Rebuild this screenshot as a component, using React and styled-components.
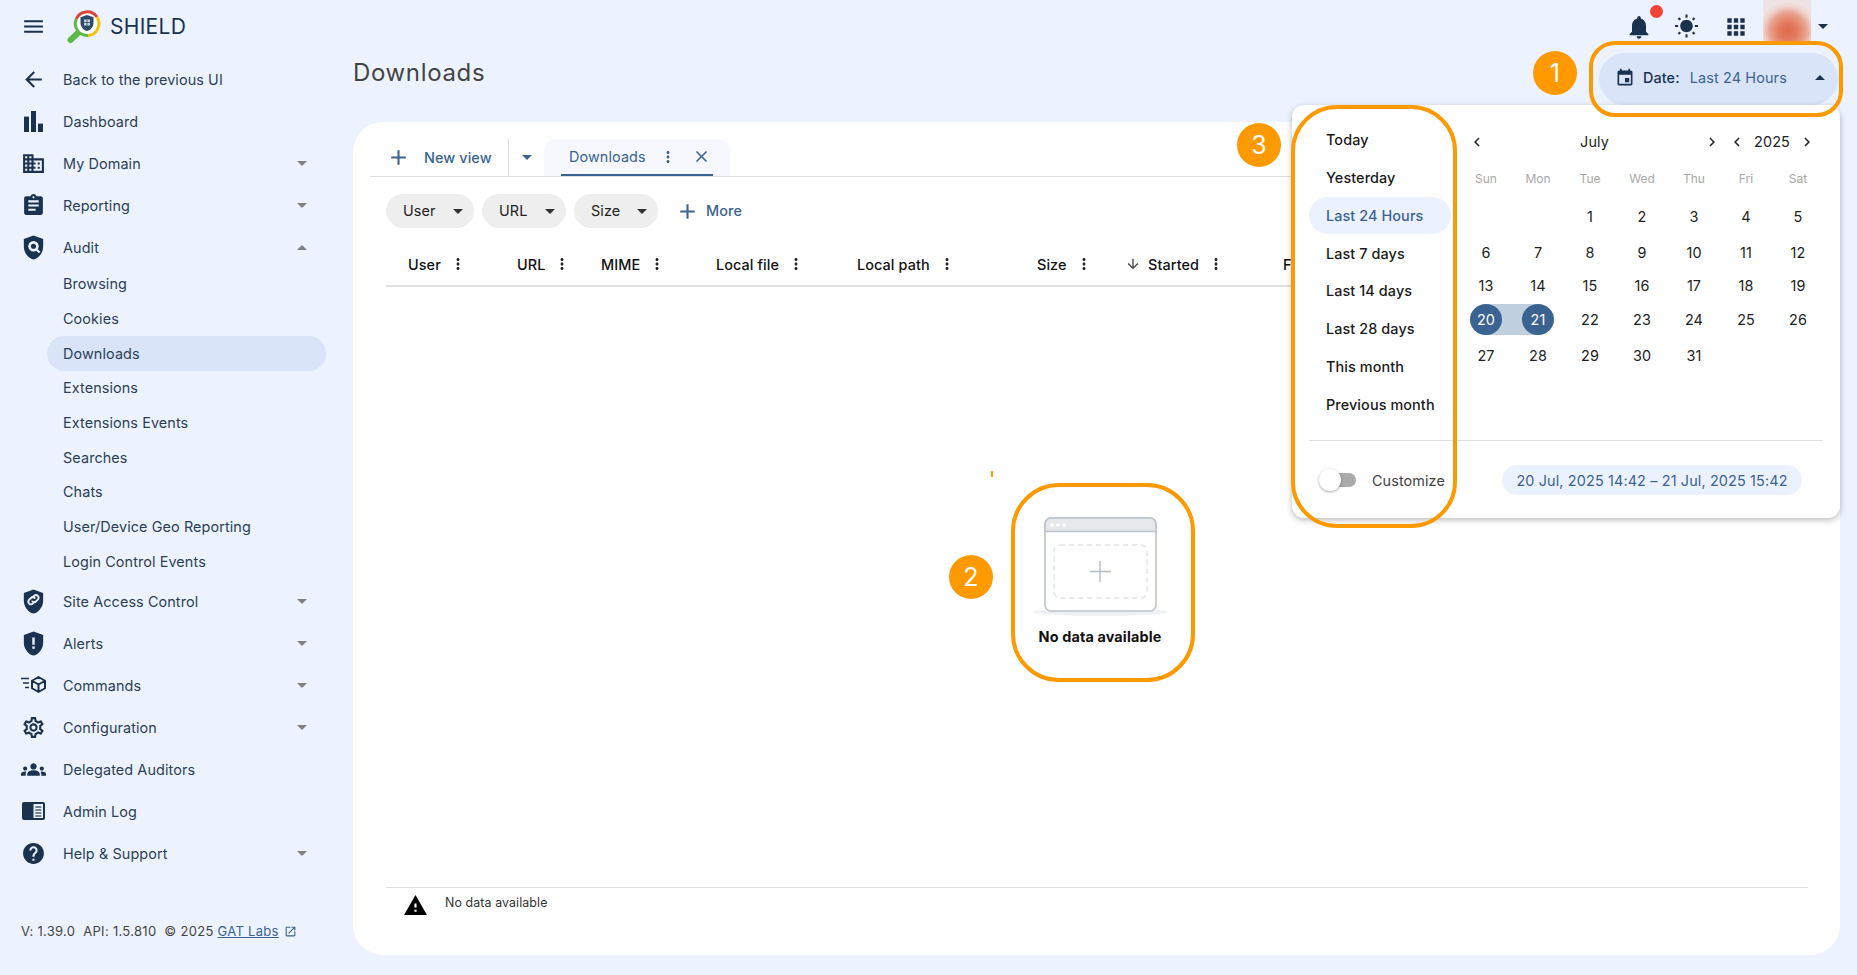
import React from 'react';
import styled, { createGlobalStyle } from 'styled-components';

const NAVY = '#1a3150';
const BLUE = '#3a6391';
const PAGE = '#edf3fe';
const ACTIVE = '#d9e4f8';

const Global = createGlobalStyle`
  html, body { margin: 0; padding: 0; height: 100%; overflow: hidden; background: ${PAGE}; }
  body { font-family: Inter, "Noto Sans", "Liberation Sans", sans-serif; font-size: 14.4px; letter-spacing: 0.1px; color: #222; }
  * { box-sizing: border-box; }
`;

const P = {
  menu: 'M3 18h18v-2H3v2zm0-5h18v-2H3v2zm0-7v2h18V6H3z',
  back: 'M20 11H7.83l5.59-5.59L12 4l-8 8 8 8 1.41-1.41L7.83 13H20v-2z',
  domain: 'M12 7V3H2v18h20V7H12zM6 19H4v-2h2v2zm0-4H4v-2h2v2zm0-4H4V9h2v2zm0-4H4V5h2v2zm4 12H8v-2h2v2zm0-4H8v-2h2v2zm0-4H8V9h2v2zm0-4H8V5h2v2zm10 12h-8v-2h2v-2h-2v-2h2v-2h-2V9h8v10zm-2-8h-2v2h2v-2zm0 4h-2v2h2v-2z',
  assignment: 'M19 3h-4.18C14.4 1.84 13.3 1 12 1c-1.3 0-2.4.84-2.82 2H5c-1.1 0-2 .9-2 2v14c0 1.1.9 2 2 2h14c1.1 0 2-.9 2-2V5c0-1.1-.9-2-2-2zm-7 0c.55 0 1 .45 1 1s-.45 1-1 1-1-.45-1-1 .45-1 1-1zm2 14H7v-2h7v2zm3-4H7v-2h10v2zm0-4H7V7h10v2z',
  bell: 'M12 22c1.1 0 2-.9 2-2h-4c0 1.1.89 2 2 2zm6-6v-5c0-3.07-1.64-5.64-4.5-6.32V4c0-.83-.67-1.5-1.5-1.5s-1.5.67-1.5 1.5v.68C7.63 5.36 6 7.92 6 11v5l-2 2v1h16v-1l-2-2z',
  sun: 'M6.76 4.84l-1.8-1.79-1.41 1.41 1.79 1.79 1.42-1.41zM4 10.5H1v2h3v-2zm9-9.95h-2V3.5h2V.55zm7.45 3.91l-1.41-1.41-1.79 1.79 1.41 1.41 1.79-1.79zm-3.21 13.7l1.79 1.8 1.41-1.41-1.8-1.79-1.4 1.4zM20 10.5v2h3v-2h-3zm-8-5c-3.31 0-6 2.69-6 6s2.69 6 6 6 6-2.69 6-6-2.69-6-6-6zm-1 16.95h2V19.5h-2v2.95zm-7.45-3.91l1.41 1.41 1.79-1.8-1.41-1.41-1.79 1.8z',
  apps: 'M4 8h4V4H4v4zm6 12h4v-4h-4v4zm-6 0h4v-4H4v4zm0-6h4v-4H4v4zm6 0h4v-4h-4v4zm6-10v4h4V4h-4zm-6 4h4V4h-4v4zm6 6h4v-4h-4v4zm0 6h4v-4h-4v4z',
  event: 'M17 12h-5v5h5v-5zM16 1v2H8V1H6v2H5c-1.11 0-1.99.9-1.99 2L3 19c0 1.1.89 2 2 2h14c1.1 0 2-.9 2-2V5c0-1.1-.9-2-2-2h-1V1h-2zm3 18H5V8h14v11z',
  add: 'M19 13h-6v6h-2v-6H5v-2h6V5h2v6h6v2z',
  kebab: 'M12 8c1.1 0 2-.9 2-2s-.9-2-2-2-2 .9-2 2 .9 2 2 2zm0 2c-1.1 0-2 .9-2 2s.9 2 2 2 2-.9 2-2-.9-2-2-2zm0 6c-1.1 0-2 .9-2 2s.9 2 2 2 2-.9 2-2-.9-2-2-2z',
  close: 'M19 6.41L17.59 5 12 10.59 6.41 5 5 6.41 10.59 12 5 17.59 6.41 19 12 13.41 17.59 19 19 17.59 13.41 12z',
  down: 'M20 12l-1.41-1.41L13 16.17V4h-2v12.17l-5.58-5.59L4 12l8 8 8-8z',
  left: 'M15.41 7.41 14 6l-6 6 6 6 1.41-1.41L10.83 12z',
  right: 'M10 6 8.59 7.41 13.17 12l-4.58 4.59L10 18l6-6z',
  warning: 'M1 21h22L12 2 1 21zm12-3h-2v-2h2v2zm0-4h-2v-4h2v4z',
  settings: 'M19.43 12.98c.04-.32.07-.64.07-.98 0-.34-.03-.66-.07-.98l2.11-1.65c.19-.15.24-.42.12-.64l-2-3.46c-.09-.16-.26-.25-.44-.25-.06 0-.12.01-.17.03l-2.49 1c-.52-.4-1.08-.73-1.69-.98l-.38-2.65C14.46 2.18 14.25 2 14 2h-4c-.25 0-.46.18-.49.42l-.38 2.65c-.61.25-1.17.59-1.69.98l-2.49-1c-.06-.02-.12-.03-.18-.03-.17 0-.34.09-.43.25l-2 3.46c-.13.22-.07.49.12.64l2.11 1.65c-.04.32-.07.65-.07.98 0 .33.03.66.07.98l-2.11 1.65c-.19.15-.24.42-.12.64l2 3.46c.09.16.26.25.44.25.06 0 .12-.01.17-.03l2.49-1c.52.4 1.08.73 1.69.98l.38 2.65c.03.24.24.42.49.42h4c.25 0 .46-.18.49-.42l.38-2.65c.61-.25 1.17-.59 1.69-.98l2.49 1c.06.02.12.03.18.03.17 0 .34-.09.43-.25l2-3.46c.12-.22.07-.49-.12-.64l-2.11-1.65zm-1.98-1.71c.04.31.05.52.05.73 0 .21-.02.43-.05.73l-.14 1.13.89.7 1.08.84-.7 1.21-1.27-.51-1.04-.42-.9.68c-.43.32-.84.56-1.25.73l-1.06.43-.16 1.13-.2 1.35h-1.4l-.19-1.35-.16-1.13-1.06-.43c-.43-.18-.83-.41-1.23-.71l-.91-.7-1.06.43-1.27.51-.7-1.21 1.08-.84.89-.7-.14-1.13c-.03-.31-.05-.54-.05-.74s.02-.43.05-.73l.14-1.13-.89-.7-1.08-.84.7-1.21 1.27.51 1.04.42.9-.68c.43-.32.84-.56 1.25-.73l1.06-.43.16-1.13.2-1.35h1.39l.19 1.35.16 1.13 1.06.43c.43.18.83.41 1.23.71l.91.7 1.06-.43 1.27-.51.7 1.21-1.07.85-.89.7.14 1.13zM12 8c-2.21 0-4 1.79-4 4s1.79 4 4 4 4-1.79 4-4-1.79-4-4-4zm0 6c-1.1 0-2-.9-2-2s.9-2 2-2 2 .9 2 2-.9 2-2 2z',
  groups: 'M12 12.75c1.63 0 3.07.39 4.24.9 1.08.48 1.76 1.56 1.76 2.73V18H6v-1.61c0-1.18.68-2.26 1.76-2.73 1.17-.52 2.61-.91 4.24-.91zM4 13c1.1 0 2-.9 2-2s-.9-2-2-2-2 .9-2 2 .9 2 2 2zm1.13 1.1c-.37-.06-.74-.1-1.13-.1-.99 0-1.93.21-2.78.58C.48 14.9 0 15.62 0 16.43V18h4.5v-1.61c0-.83.23-1.61.63-2.29zM20 13c1.1 0 2-.9 2-2s-.9-2-2-2-2 .9-2 2 .9 2 2 2zm4 3.43c0-.81-.48-1.53-1.22-1.85-.85-.37-1.79-.58-2.78-.58-.39 0-.76.04-1.13.1.4.68.63 1.46.63 2.29V18H24v-1.57zM12 6c1.66 0 3 1.34 3 3s-1.34 3-3 3-3-1.34-3-3 1.34-3 3-3z',
  help: 'M12 2C6.48 2 2 6.48 2 12s4.48 10 10 10 10-4.48 10-10S17.52 2 12 2zm1 17h-2v-2h2v2zm2.07-7.75l-.9.92C13.45 12.9 13 13.5 13 15h-2v-.5c0-1.1.45-2.1 1.17-2.83l1.24-1.26c.37-.36.59-.86.59-1.41 0-1.1-.9-2-2-2s-2 .9-2 2H8c0-2.21 1.79-4 4-4s4 1.79 4 4c0 .88-.36 1.68-.93 2.25z',
  shield: 'M12 2 4 5v6.09c0 5.05 3.41 9.76 8 10.91 4.59-1.15 8-5.86 8-10.91V5l-8-3z',
  open: 'M19 19H5V5h7V3H5c-1.11 0-2 .9-2 2v14c0 1.1.89 2 2 2h14c1.1 0 2-.9 2-2v-7h-2v7zM14 3v2h3.59l-9.83 9.83 1.41 1.41L19 6.41V10h2V3h-7z',
};

const Icon = ({ d, size = 24, color = 'currentColor' }) => (
  <svg width={size} height={size} viewBox="0 0 24 24" fill={color} aria-hidden="true"><path d={d} /></svg>
);

const BarsIcon = () => (
  <svg width="19" height="21" viewBox="0 0 19 21" fill={NAVY} aria-hidden="true">
    <rect x="0" y="5.6" width="5" height="15.4" /><rect x="7" y="0" width="5" height="21" /><rect x="14" y="12.6" width="5" height="8.4" />
  </svg>
);
const AuditIcon = () => (
  <svg width="29" height="29" viewBox="0 0 24 24" aria-hidden="true">
    <path d={P.shield} fill={NAVY} />
    <circle cx="12" cy="11" r="4.3" fill={PAGE} />
    <circle cx="12" cy="11" r="2.1" fill={NAVY} />
    <path d="M14.5 13.6l2.6 2.6" stroke={PAGE} strokeWidth="1.8" />
  </svg>
);
const LinkShieldIcon = () => (
  <svg width="29" height="29" viewBox="0 0 24 24" aria-hidden="true">
    <path d={P.shield} fill={NAVY} />
    <g fill="none" stroke={PAGE} strokeWidth="1.5" strokeLinecap="round">
      <path d="M11.2 8.6l1.4-1.4a2.2 2.2 0 0 1 3.1 3.1l-1.6 1.6a2.2 2.2 0 0 1-3.1 0" />
      <path d="M12.8 12.4l-1.4 1.4a2.2 2.2 0 0 1-3.1-3.1l1.6-1.6a2.2 2.2 0 0 1 3.1 0" />
    </g>
  </svg>
);
const AlertShieldIcon = () => (
  <svg width="29" height="29" viewBox="0 0 24 24" aria-hidden="true">
    <path d={P.shield} fill={NAVY} />
    <rect x="11" y="7" width="2" height="6" fill={PAGE} /><rect x="11" y="14.4" width="2" height="2" fill={PAGE} />
  </svg>
);
const CommandsIcon = () => (
  <svg width="25" height="18" viewBox="0 0 25 18" fill="none" stroke={NAVY} strokeWidth="2" aria-hidden="true">
    <path d="M0 2.5h8M2 7h6M4 11.5h4" strokeWidth="1.7" />
    <path d="M17.5 1l6.5 3.75v7.5L17.5 16l-6.5-3.75v-7.5zM11 4.75l6.5 3.75L24 4.75M17.5 8.5V16" strokeLinejoin="round" />
  </svg>
);
const AdminLogIcon = () => (
  <svg width="23" height="18" viewBox="0 0 23 18" aria-hidden="true">
    <rect width="23" height="18" rx="2" fill={NAVY} />
    <rect x="11.5" y="2" width="9.5" height="14" fill={PAGE} />
    <path d="M13.3 5h6M13.3 8h6M13.3 11h6M13.3 14h6" stroke="#4a5f7a" strokeWidth="1.4" />
  </svg>
);
const Logo = () => (
  <svg width="38" height="36" viewBox="0 0 38 36" aria-hidden="true">
    <path d="M12 25L4.500 32" stroke="#5bb947" strokeWidth="6" strokeLinecap="round" />
    <circle cx="21" cy="15.500" r="11.500" fill="#fff" />
    <path d="M10.200 11A12 12 0 0 1 31 9" fill="none" stroke="#d8433a" strokeWidth="3" />
    <path d="M31 9A12 12 0 0 1 22 27.500" fill="none" stroke="#f4c20d" strokeWidth="3" />
    <path d="M22 27.500A12 12 0 0 1 10.200 11" fill="none" stroke="#5bb947" strokeWidth="3" />
    <path d="M21 7l-6.500 2.300v5.400c0 4 2.700 7.300 6.500 8.300 3.800-1 6.500-4.300 6.500-8.300V9.300z" fill="#2d4a66" />
    <rect x="18" y="11.500" width="6" height="6" fill="#c6d3e0" />
    <path d="M21 11.500v6M18 14.500h6" stroke="#2d4a66" strokeWidth="0.800" />
  </svg>
);

const Page = styled.div`
  position: relative;
  width: 1857px;
  height: 975px;
  overflow: hidden;
  display: grid;
  grid-template-columns: 353px 1fr;
  grid-template-rows: 53px 1fr;
`;
const TopBar = styled.header`
  grid-column: 1 / 3;
  display: flex;
  align-items: center;
  padding-left: 21px;
  padding-right: 29px;
`;
const Burger = styled.div`
  display: flex;
  color: ${NAVY};
`;
const Brand = styled.div`
  display: flex;
  align-items: center;
  margin-left: 20px;
  margin-top: -1px;
  font-size: 21px;
  color: ${NAVY};
`;
const BrandName = styled.span`
  margin-left: 6px;
  letter-spacing: 0.3px;
`;
const TopActions = styled.div`
  margin-left: auto;
  display: flex;
  align-items: center;
  height: 100%;
  color: ${NAVY};
`;
const TopIcon = styled.div`
  position: relative;
  width: ${(p) => p.$w || 48}px;
  height: 52px;
  display: flex;
  align-items: center;
  justify-content: center;
  margin-left: ${(p) => p.$ml || 0}px;
`;
const Dot = styled.span`
  position: absolute;
  top: 4px;
  right: -1px;
  width: 13px;
  height: 13px;
  border-radius: 50%;
  background: #f44336;
`;
const Avatar = styled.div`
  align-self: flex-start;
  width: 48px;
  height: 41px;
  margin-left: 3px;
  background: radial-gradient(circle 29px at 52% 76%, #df6a4c 0%, #e4795d 30%, #e9a08c 62%, #efd2cb 84%, #efe2e2 100%);
`;
const Tri = styled.span`
  display: inline-block;
  flex: none;
  width: 0;
  height: 0;
  border-left: ${(p) => (p.$s || 10) / 2}px solid transparent;
  border-right: ${(p) => (p.$s || 10) / 2}px solid transparent;
  ${(p) => (p.$up ? `border-bottom: ${(p.$s || 10) / 2}px solid ${p.$c || NAVY};` : `border-top: ${(p.$s || 10) / 2}px solid ${p.$c || NAVY};`)}
  margin-left: ${(p) => (p.$auto ? 'auto' : `${p.$ml || 0}px`)};
`;
const Sidebar = styled.nav`
  display: flex;
  flex-direction: column;
  padding-top: 5px;
  padding-bottom: 36px;
  color: #2c3f57;
`;
const NavRow = styled.div`
  height: 42px;
  display: flex;
  align-items: center;
  padding-left: 14px;
  padding-right: 46px;
`;
const NavIcon = styled.span`
  width: 39px;
  display: flex;
  justify-content: center;
  color: ${NAVY};
`;
const NavLabel = styled.span`
  margin-left: 10px;
  flex: 1;
`;
const SubRow = styled.div`
  height: 34.7px;
  margin-left: 47px;
  margin-right: 27px;
  padding-left: 16px;
  display: flex;
  align-items: center;
  border-radius: 18px;
  background: ${(p) => (p.$active ? ACTIVE : 'transparent')};
`;
const SubList = styled.div`
  display: flex;
  flex-direction: column;
  margin-top: -1.5px;
  margin-bottom: 1.5px;
`;
const Version = styled.div`
  margin-top: auto;
  padding-left: 21px;
  font-size: 13px;
  letter-spacing: 0.3px;
  color: #444;
  display: flex;
  align-items: center;
  white-space: pre;
`;
const VLink = styled.span`
  color: ${BLUE};
  text-decoration: underline;
`;
const VIcon = styled.span`
  display: flex;
  margin-left: 5px;
  color: ${BLUE};
`;
const Main = styled.main`
  display: flex;
  flex-direction: column;
  padding-right: 17px;
  padding-bottom: 20px;
  min-width: 0;
`;
const TitleRow = styled.div`
  height: 69px;
  display: flex;
  justify-content: space-between;
  align-items: flex-start;
`;
const Title = styled.h1`
  margin: 0;
  height: 40px;
  line-height: 40px;
  font-size: 24px;
  font-weight: 400;
  color: #444;
  letter-spacing: 0.65px;
`;
const DateBtn = styled.div`
  width: 239px;
  height: 52px;
  margin-right: 2px;
  border-radius: 26px;
  background: ${ACTIVE};
  display: flex;
  align-items: center;
  padding: 0 13px 3px 16px;
  color: ${NAVY};
`;
const DateLabel = styled.span`
  margin-left: 8px;
  font-weight: 500;
`;
const DateValue = styled.span`
  margin-left: 10px;
  color: ${BLUE};
  letter-spacing: 0.15px;
`;
const Card = styled.section`
  flex: 1;
  display: flex;
  flex-direction: column;
  background: #fff;
  border-radius: 30px;
  padding: 17px 32px 0 17px;
  min-height: 0;
`;
const TabBar = styled.div`
  height: 38px;
  flex: none;
  display: flex;
  align-items: stretch;
  border-bottom: 1px solid #e0e0e0;
  margin-right: -15px;
  color: ${BLUE};
`;
const NewView = styled.div`
  width: 139px;
  display: flex;
  align-items: center;
  padding-left: 16px;
  border-right: 1px solid #dcdcdc;
  font-weight: 500;
`;
const NewViewLabel = styled.span`
  margin-left: 13px;
  margin-top: -1px;
`;
const ViewCaret = styled.div`
  width: 35px;
  display: flex;
  align-items: center;
  justify-content: center;
`;
const Tab = styled.div`
  width: 186px;
  padding: 0 17px;
  background: #f6f8fe;
  border-radius: 12px 12px 0 0;
  display: flex;
`;
const TabInner = styled.div`
  flex: 1;
  display: flex;
  align-items: center;
  padding-left: 8px;
  border-bottom: 2px solid ${BLUE};
`;
const TabDots = styled.span`
  display: flex;
  margin-left: 13px;
`;
const TabClose = styled.span`
  display: flex;
  margin-left: 15px;
`;
const Body = styled.div`
  flex: 1;
  display: flex;
  flex-direction: column;
  margin-left: 16px;
  min-height: 0;
`;
const Filters = styled.div`
  flex: none;
  display: flex;
  align-items: center;
  gap: 8px;
  margin-top: 17px;
  height: 34px;
`;
const Chip = styled.div`
  width: ${(p) => p.$w}px;
  height: 34px;
  border-radius: 17px;
  background: #eee;
  display: flex;
  align-items: center;
  justify-content: space-between;
  padding: 0 11px 0 17px;
  color: #222;
`;
const ChipText = styled.span`
  margin-top: -2px;
`;
const More = styled.div`
  display: flex;
  align-items: center;
  margin-left: 9px;
  color: ${BLUE};
  font-weight: 500;
`;
const MoreLabel = styled.span`
  margin-left: 6px;
  margin-top: -2px;
`;
const HeadRow = styled.div`
  flex: none;
  height: 42px;
  margin-top: 17px;
  padding: 0 0 2px 22px;
  display: flex;
  align-items: center;
  border-bottom: 2px solid #e0e0e0;
  overflow: hidden;
  color: #111;
  font-weight: 500;
  white-space: nowrap;
`;
const HeadCell = styled.div`
  flex: none;
  width: ${(p) => p.$w}px;
  display: flex;
  align-items: center;
`;
const SortArrow = styled.span`
  display: flex;
  margin-right: 7px;
  color: #444;
`;
const HeadDots = styled.span`
  display: flex;
  margin-left: 8px;
  color: #222;
`;
const Empty = styled.div`
  flex: 1;
  display: flex;
  flex-direction: column;
  align-items: center;
  justify-content: center;
  padding: 0 0 12px 6px;
  min-height: 0;
`;
const EmptyText = styled.div`
  margin-top: 11px;
  font-weight: 700;
  color: #111;
  letter-spacing: 0.15px;
`;
const Foot = styled.div`
  flex: none;
  height: 68px;
  border-top: 1px solid #e0e0e0;
  display: flex;
  align-items: flex-start;
  padding: 5px 0 0 17px;
  font-size: 12.4px;
  color: #333;
`;
const FootText = styled.span`
  margin-left: 17px;
  margin-top: 2px;
`;

/* overlays */
const Popup = styled.div`
  position: absolute;
  left: 1292px;
  top: 105px;
  width: 548px;
  height: 413px;
  background: #fff;
  border-radius: 12px;
  box-shadow: 0 2px 6px rgba(0, 0, 0, 0.28);
  display: flex;
  flex-direction: column;
  padding: 16px 17px 0;
`;
const PopTop = styled.div`
  display: flex;
  height: 320px;
  flex: none;
  border-bottom: 1px solid #e0e0e0;
`;
const Presets = styled.div`
  width: 142px;
  flex: none;
  display: flex;
  flex-direction: column;
  margin-top: 0;
`;
const Preset = styled.div`
  height: 37.75px;
  flex: none;
  display: flex;
  align-items: center;
  padding-left: 17px;
  border-radius: 19px;
  font-weight: 500;
  white-space: nowrap;
  color: ${(p) => (p.$on ? BLUE : '#1a1a1a')};
  background: ${(p) => (p.$on ? '#ecf2fd' : 'transparent')};
`;
const Calendar = styled.div`
  margin-left: 9px;
  width: 364px;
  display: flex;
  flex-direction: column;
`;
const CalHead = styled.div`
  height: 41px;
  padding-left: 5px;
  display: flex;
  align-items: center;
  flex: none;
`;
const CalGroup = styled.div`
  width: ${(p) => p.$w}px;
  margin-left: ${(p) => p.$ml || 0}px;
  display: flex;
  align-items: center;
  justify-content: space-between;
`;
const Chevron = styled.span`
  width: 24px;
  display: flex;
  justify-content: center;
  color: #222;
`;
const Weekdays = styled.div`
  height: 32px;
  margin-bottom: 5px;
  flex: none;
  display: grid;
  grid-template-columns: repeat(7, 52px);
  align-items: center;
  justify-items: center;
  font-size: 12px;
  letter-spacing: 0;
  color: #a8a8a8;
`;
const Days = styled.div`
  display: grid;
  grid-template-columns: repeat(7, 52px);
  grid-template-rows: 36px 36px 30px 38px 34px;
`;
const DayCell = styled.div`
  position: relative;
  display: flex;
  align-items: center;
  justify-content: center;
  color: #222;
  &::before {
    content: '';
    display: ${(p) => (p.$rangeStart || p.$rangeEnd ? 'block' : 'none')};
    position: absolute;
    top: 3px;
    bottom: 4px;
    left: ${(p) => (p.$rangeStart ? '50%' : '0')};
    right: ${(p) => (p.$rangeEnd ? '50%' : '0')};
    background: #c0cfde;
  }
`;
const DayNum = styled.span`
  position: relative;
  width: 32px;
  height: 31px;
  margin-top: -1px;
  display: flex;
  align-items: center;
  justify-content: center;
  border-radius: 50%;
  background: ${(p) => (p.$sel ? BLUE : 'transparent')};
  color: ${(p) => (p.$sel ? '#fff' : 'inherit')};
`;
const PopFoot = styled.div`
  flex: 1;
  display: flex;
  align-items: center;
  padding-left: 11px;
  padding-right: 21px;
  padding-top: 1px;
`;
const Toggle = styled.div`
  position: relative;
  width: 35px;
  height: 14px;
  flex: none;
  border-radius: 7px;
  background: #aaa;
  margin-left: 1px;
`;
const Knob = styled.span`
  position: absolute;
  left: -2px;
  top: -4px;
  width: 22px;
  height: 22px;
  border-radius: 50%;
  background: #fff;
  box-shadow: 0 1px 3px rgba(0, 0, 0, 0.35);
`;
const ToggleLabel = styled.span`
  margin-left: 16px;
  color: #444;
`;
const RangePill = styled.div`
  margin-left: auto;
  width: 300px;
  height: 30px;
  border-radius: 15px;
  background: #ecf2fd;
  color: ${BLUE};
  display: flex;
  align-items: center;
  justify-content: center;
  white-space: nowrap;
  letter-spacing: 0.14px;
`;
const Ring = styled.div`
  position: absolute;
  left: ${(p) => p.$x}px;
  top: ${(p) => p.$y}px;
  width: ${(p) => p.$w}px;
  height: ${(p) => p.$h}px;
  border: 4.5px solid #ff9900;
  border-radius: ${(p) => p.$r}px;
  pointer-events: none;
`;
const Marker = styled.div`
  position: absolute;
  left: ${(p) => p.$cx - 22}px;
  top: ${(p) => p.$cy - 22}px;
  width: 44px;
  height: 44px;
  border-radius: 50%;
  background: #ff9900;
  color: #fff;
  font-size: 25px;
  display: flex;
  align-items: center;
  justify-content: center;
`;
const Tick = styled.span`
  position: absolute;
  left: 991px;
  top: 471px;
  width: 2px;
  height: 6px;
  background: #ff9900;
`;

const EmptyArt = () => (
  <svg width="136" height="100" viewBox="0 0 136 100" aria-hidden="true">
    <ellipse cx="68" cy="95" rx="67" ry="4" fill="#eef0f3" />
    <rect x="13" y="1" width="111" height="93" rx="6" fill="#fff" stroke="#bcc3cd" strokeWidth="1.6" />
    <path d="M13 14.500V7a6 6 0 0 1 6-6h99a6 6 0 0 1 6 6v7.500z" fill="#e6e8ec" stroke="#bcc3cd" strokeWidth="1.6" />
    <circle cx="20" cy="8" r="1.800" fill="#fff" /><circle cx="26" cy="8" r="1.800" fill="#fff" /><circle cx="32" cy="8" r="1.800" fill="#fff" />
    <rect x="22" y="28" width="93" height="53" rx="6" fill="none" stroke="#e1e3e7" strokeWidth="1.400" strokeDasharray="5 4" />
    <path d="M68 44v21M58 54.500h21" stroke="#b6bcc6" strokeWidth="1.400" />
  </svg>
);

const navTop = [
  { label: 'Back to the previous UI', icon: <Icon d={P.back} size={25} /> },
  { label: 'Dashboard', icon: <BarsIcon /> },
  { label: 'My Domain', icon: <Icon d={P.domain} size={25} />, caret: 'down' },
  { label: 'Reporting', icon: <Icon d={P.assignment} size={25} />, caret: 'down' },
  { label: 'Audit', icon: <AuditIcon />, caret: 'up' },
];
const subItems = ['Browsing', 'Cookies', 'Downloads', 'Extensions', 'Extensions Events', 'Searches', 'Chats', 'User/Device Geo Reporting', 'Login Control Events'];
const navBottom = [
  { label: 'Site Access Control', icon: <LinkShieldIcon />, caret: 'down' },
  { label: 'Alerts', icon: <AlertShieldIcon />, caret: 'down' },
  { label: 'Commands', icon: <CommandsIcon />, caret: 'down' },
  { label: 'Configuration', icon: <Icon d={P.settings} size={25} />, caret: 'down' },
  { label: 'Delegated Auditors', icon: <Icon d={P.groups} size={25} /> },
  { label: 'Admin Log', icon: <AdminLogIcon /> },
  { label: 'Help & Support', icon: <Icon d={P.help} size={25} />, caret: 'down' },
];
const NavItem = ({ label, icon, caret }) => (
  <NavRow>
    <NavIcon>{icon}</NavIcon>
    <NavLabel>{label}</NavLabel>
    {caret && <Tri $up={caret === 'up'} $c="#808080" />}
  </NavRow>
);

const columns = [
  { t: 'User', w: 109 }, { t: 'URL', w: 84 }, { t: 'MIME', w: 115 }, { t: 'Local file', w: 141 },
  { t: 'Local path', w: 180 }, { t: 'Size', w: 88 }, { t: 'Started', w: 158, sort: true }, { t: 'Finished', w: 120 },
];
const presets = ['Today', 'Yesterday', 'Last 24 Hours', 'Last 7 days', 'Last 14 days', 'Last 28 days', 'This month', 'Previous month'];
const weekdays = ['Sun', 'Mon', 'Tue', 'Wed', 'Thu', 'Fri', 'Sat'];
const dayCells = [null, null, ...Array.from({ length: 31 }, (_, i) => i + 1)];

export default function App() {
  return (
    <Page>
      <Global />
      <TopBar>
        <Burger><Icon d={P.menu} size={25} /></Burger>
        <Brand><Logo /><BrandName>SHIELD</BrandName></Brand>
        <TopActions>
          <TopIcon $w={46}><Icon d={P.bell} size={28} /><Dot /></TopIcon>
          <TopIcon><Icon d={P.sun} size={25} /></TopIcon>
          <TopIcon $ml={2}><Icon d={P.apps} size={26} /></TopIcon>
          <Avatar />
          <Tri $ml={7} />
        </TopActions>
      </TopBar>
      <Sidebar>
        {navTop.map((n) => <NavItem key={n.label} {...n} />)}
        <SubList>
          {subItems.map((s) => <SubRow key={s} $active={s === 'Downloads'}>{s}</SubRow>)}
        </SubList>
        {navBottom.map((n) => <NavItem key={n.label} {...n} />)}
        <Version>
          V: 1.39.0{'  '}API: 1.5.810{'  '}© 2025 <VLink>GAT Labs</VLink>
          <VIcon><Icon d={P.open} size={13} /></VIcon>
        </Version>
      </Sidebar>
      <Main>
        <TitleRow>
          <Title>Downloads</Title>
          <DateBtn>
            <Icon d={P.event} size={20} />
            <DateLabel>Date:</DateLabel>
            <DateValue>Last 24 Hours</DateValue>
            <Tri $up $auto />
          </DateBtn>
        </TitleRow>
        <Card>
          <TabBar>
            <NewView><Icon d={P.add} size={25} /><NewViewLabel>New view</NewViewLabel></NewView>
            <ViewCaret><Tri $c={BLUE} /></ViewCaret>
            <Tab>
              <TabInner>
                Downloads
                <TabDots><Icon d={P.kebab} size={18} /></TabDots>
                <TabClose><Icon d={P.close} size={19} /></TabClose>
              </TabInner>
            </Tab>
          </TabBar>
          <Body>
            <Filters>
              <Chip $w={88}><ChipText>User</ChipText><Tri $c="#333" /></Chip>
              <Chip $w={84}><ChipText>URL</ChipText><Tri $c="#333" /></Chip>
              <Chip $w={84}><ChipText>Size</ChipText><Tri $c="#333" /></Chip>
              <More><Icon d={P.add} size={25} /><MoreLabel>More</MoreLabel></More>
            </Filters>
            <HeadRow>
              {columns.map((c) => (
                <HeadCell key={c.t} $w={c.w}>
                  {c.sort && <SortArrow><Icon d={P.down} size={16} /></SortArrow>}
                  {c.t}
                  <HeadDots><Icon d={P.kebab} size={18} /></HeadDots>
                </HeadCell>
              ))}
            </HeadRow>
            <Empty>
              <EmptyArt />
              <EmptyText>No data available</EmptyText>
            </Empty>
            <Foot>
              <Icon d={P.warning} size={25} color="#000" />
              <FootText>No data available</FootText>
            </Foot>
          </Body>
        </Card>
      </Main>

      <Popup>
        <PopTop>
          <Presets>
            {presets.map((p) => <Preset key={p} $on={p === 'Last 24 Hours'}>{p}</Preset>)}
          </Presets>
          <Calendar>
            <CalHead>
              <CalGroup $w={259}>
                <Chevron><Icon d={P.left} size={18} /></Chevron>
                <span>July</span>
                <Chevron><Icon d={P.right} size={18} /></Chevron>
              </CalGroup>
              <CalGroup $w={94} $ml={1}>
                <Chevron><Icon d={P.left} size={18} /></Chevron>
                <span>2025</span>
                <Chevron><Icon d={P.right} size={18} /></Chevron>
              </CalGroup>
            </CalHead>
            <Weekdays>{weekdays.map((d) => <span key={d}>{d}</span>)}</Weekdays>
            <Days>
              {dayCells.map((d, i) => (
                <DayCell key={i} $rangeStart={d === 20} $rangeEnd={d === 21}>
                  {d && <DayNum $sel={d === 20 || d === 21}>{d}</DayNum>}
                </DayCell>
              ))}
            </Days>
          </Calendar>
        </PopTop>
        <PopFoot>
          <Toggle><Knob /></Toggle>
          <ToggleLabel>Customize</ToggleLabel>
          <RangePill>20 Jul, 2025 14:42 – 21 Jul, 2025 15:42</RangePill>
        </PopFoot>
      </Popup>

      <Ring $x={1589} $y={41} $w={254} $h={76} $r={26} />
      <Ring $x={1011} $y={483} $w={184} $h={199} $r={48} />
      <Ring $x={1291} $y={105} $w={166} $h={423} $r={46} />
      <Marker $cx={1555} $cy={73}>1</Marker>
      <Marker $cx={971} $cy={577}>2</Marker>
      <Marker $cx={1259} $cy={145}>3</Marker>
      <Tick />
    </Page>
  );
}
